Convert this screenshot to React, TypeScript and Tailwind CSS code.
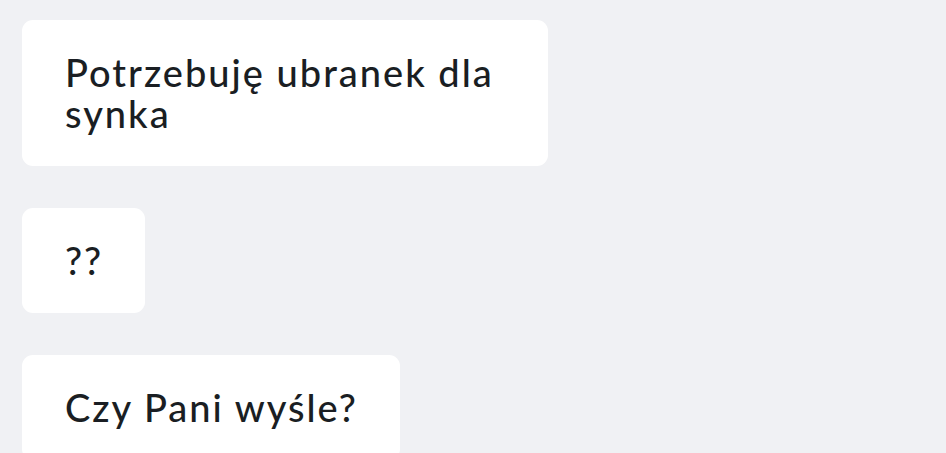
export default function App() {
  const messages = ["Potrzebuję ubranek dla synka", "??", "Czy Pani wyśle?"]

  return (
    <div
      className="h-[453px] w-[946px] overflow-hidden bg-[#f0f1f4] pl-[22px] pt-[20px]"
      style={{ fontFamily: "Lato, 'Open Sans', sans-serif" }}
    >
      <div className="flex flex-col items-start gap-[42px]">
        {messages.map((m) => (
          <div
            key={m}
            className="w-fit max-w-[526px] rounded-[11px] bg-white pl-[43px] pr-[42px] py-[32px] text-[38px] font-medium leading-[41px] tracking-[2px] text-[#1a1e23]"
          >
            {m}
          </div>
        ))}
      </div>
    </div>
  )
}
